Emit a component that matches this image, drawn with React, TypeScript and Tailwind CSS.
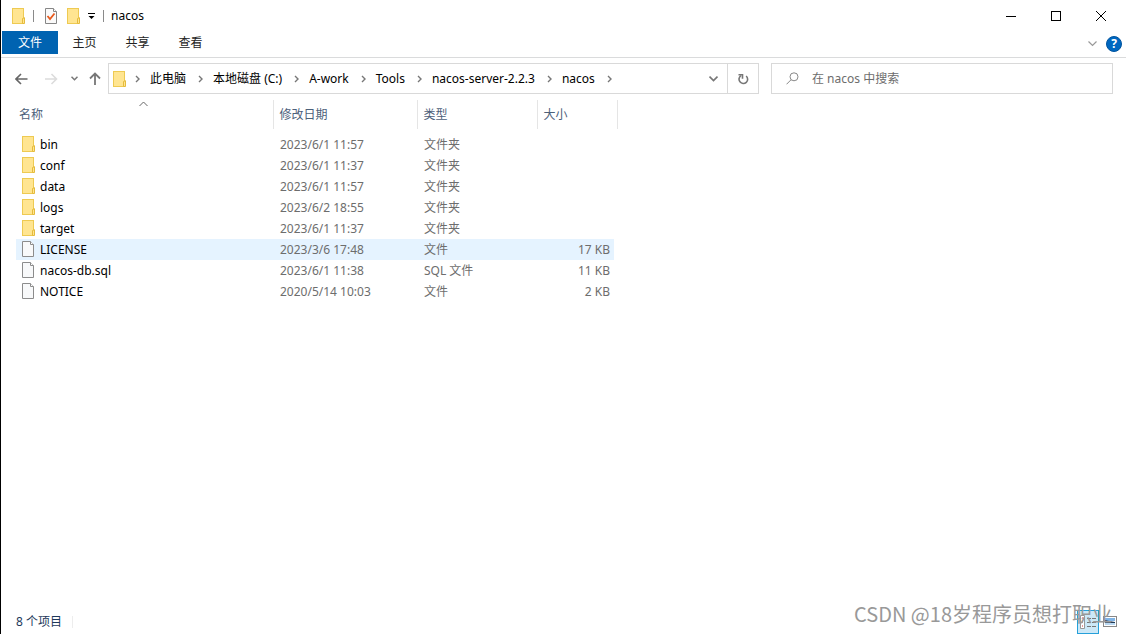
import type { ReactNode } from "react"

interface FileItem {
    name: string;
    date: string;
    type: string;
    size?: string;
    folder?: boolean;
}

const files: FileItem[] = [
    { name: 'bin', date: '2023/6/1 11:57', type: '文件夹', folder: true },
    { name: 'conf', date: '2023/6/1 11:37', type: '文件夹', folder: true },
    { name: 'data', date: '2023/6/1 11:57', type: '文件夹', folder: true },
    { name: 'logs', date: '2023/6/2 18:55', type: '文件夹', folder: true },
    { name: 'target', date: '2023/6/1 11:37', type: '文件夹', folder: true },
    { name: 'LICENSE', date: '2023/3/6 17:48', type: '文件', size: '17 KB' },
    { name: 'nacos-db.sql', date: '2023/6/1 11:38', type: 'SQL 文件', size: '11 KB' },
    { name: 'NOTICE', date: '2020/5/14 10:03', type: '文件', size: '2 KB' },
];

const crumbs = ['此电脑', '本地磁盘 (C:)', 'A-work', 'Tools', 'nacos-server-2.2.3', 'nacos'];

const tabs = ['主页', '共享', '查看'];

const hovered = 'LICENSE';

const FolderIcon = () => (
    <svg width="14" height="16" viewBox="0 0 14 16" className="shrink-0" aria-hidden="true">
        <rect x="0.5" y="0.5" width="11" height="15" fill="#ffe591" stroke="#eeca52" />
        <path d="M10.5 15.5v-5l2-.8v5.8z" fill="#ffe591" stroke="#e5bb3c" />
    </svg>
);

const FileIcon = () => (
    <svg width="14" height="16" viewBox="0 0 14 16" className="shrink-0" aria-hidden="true">
        <path d="M0.5 0.5h8l3 3v12h-11z" fill="#f8f9fa" stroke="#8c8c8c" />
        <path d="M8.5 0.5v3h3" fill="#fff" stroke="#8c8c8c" />
    </svg>
);

const Chevron = () => (
    <svg width="5" height="8" viewBox="0 0 5 8" className="shrink-0" aria-hidden="true">
        <path d="M1 1l3 3-3 3" fill="none" stroke="#777" strokeWidth="1.4" />
    </svg>
);

const IconButton = ({ label, className, children }: { label: string; className: string; children: ReactNode }) => (
    <button type="button" aria-label={label} className={`flex items-center justify-center shrink-0 ${className}`}>
        {children}
    </button>
);

const TitleBar = () => (
    <header className="flex items-center h-[31px] pl-[11px]">
        <FolderIcon />
        <span className="w-px h-3 bg-[#8a8a8a] ml-[7px] mr-[11px]" />
        <IconButton label="属性" className="w-3">
            <svg width="12" height="16" viewBox="0 0 12 16">
                <path d="M0.5 0.5h8l3 3v12h-11z" fill="#fafafa" stroke="#868686" />
                <path d="M8.5 0.5v3h3" fill="#fff" stroke="#868686" />
                <path d="M2.5 8l2.5 3 4.5-5.5" fill="none" stroke="#e8591c" strokeWidth="1.8" />
            </svg>
        </IconButton>
        <IconButton label="新建文件夹" className="ml-[10px]">
            <FolderIcon />
        </IconButton>
        <IconButton label="自定义快速访问工具栏" className="ml-[7px] w-[7px]">
            <svg width="7" height="6" viewBox="0 0 7 6">
                <path d="M0 0.5h7" stroke="#000" />
                <path d="M0.5 3h6l-3 3z" fill="#000" />
            </svg>
        </IconButton>
        <span className="w-px h-3 bg-[#8a8a8a] ml-2 mr-[7px]" />
        <h1>nacos</h1>
        <div className="flex ml-auto pr-[2px]">
            <IconButton label="最小化" className="w-[45px] h-[31px]">
                <svg width="10" height="10" viewBox="0 0 10 10">
                    <path d="M0 5.5h10" stroke="#000" />
                </svg>
            </IconButton>
            <IconButton label="最大化" className="w-[45px] h-[31px]">
                <svg width="10" height="10" viewBox="0 0 10 10">
                    <rect x="0.5" y="0.5" width="9" height="9" fill="none" stroke="#000" />
                </svg>
            </IconButton>
            <IconButton label="关闭" className="w-[46px] h-[31px]">
                <svg width="10" height="10" viewBox="0 0 10 10">
                    <path d="M0 0l10 10M10 0L0 10" stroke="#000" />
                </svg>
            </IconButton>
        </div>
    </header>
);

const Ribbon = () => (
    <nav className="flex items-start h-[27px] pl-px border-b border-[#dadbdc]">
        <button type="button" className="w-14 h-[23px] pt-px bg-[#0063b1] text-white">文件</button>
        {tabs.map((tab) => (
            <button key={tab} type="button" className="w-[53px] h-[23px] pt-px text-[#222]">{tab}</button>
        ))}
        <div className="flex items-center ml-auto h-[26px] gap-[9px] pr-1">
            <IconButton label="展开功能区" className="w-[10px]">
                <svg width="9" height="6" viewBox="0 0 9 6">
                    <path d="M0.5 0.5l4 4 4-4" fill="none" stroke="#999" strokeWidth="1.2" />
                </svg>
            </IconButton>
            <IconButton label="帮助" className="w-4 h-4 rounded-full bg-[#0067c0] border border-[#00549f] text-white font-bold">
                ?
            </IconButton>
        </div>
    </nav>
);

const AddressRow = () => (
    <div className="flex items-center mt-[5px] px-[13px]">
        <IconButton label="后退" className="w-[14px]">
            <svg width="13" height="12" viewBox="0 0 13 12">
                <path d="M12.5 6H1.5M6 1L1 6l5 5" fill="none" stroke="#666" strokeWidth="1.6" />
            </svg>
        </IconButton>
        <IconButton label="前进" className="w-[14px] ml-4">
            <svg width="13" height="12" viewBox="0 0 13 12">
                <path d="M0 6h11.5M6.500 1l5 5-5 5" fill="none" stroke="#dcdcdc" strokeWidth="1.6" />
            </svg>
        </IconButton>
        <IconButton label="最近位置" className="w-2 ml-3">
            <svg width="7" height="5" viewBox="0 0 7 5">
                <path d="M0.5 0.8l3 3 3-3" fill="none" stroke="#777" strokeWidth="1.5" />
            </svg>
        </IconButton>
        <IconButton label="上移" className="w-3 ml-[11px]">
            <svg width="12" height="13" viewBox="0 0 12 13">
                <path d="M6 13V1.5M1 6.500l5-5 5 5" fill="none" stroke="#777" strokeWidth="1.8" />
            </svg>
        </IconButton>

        <div className="flex items-center flex-1 h-[31px] ml-[7px] mr-3 pl-1 border border-[#d9d9d9] min-w-0">
            <FolderIcon />
            <span className="ml-2"><Chevron /></span>
            {crumbs.map((crumb) => (
                <div key={crumb} className="flex items-center shrink-0">
                    <button type="button" className="pl-[10px] pr-3">{crumb}</button>
                    <Chevron />
                </div>
            ))}
            <IconButton label="以前的位置" className="w-7 h-full ml-auto">
                <svg width="9" height="7" viewBox="0 0 9 7">
                    <path d="M0.5 1.5l4 4 4-4" fill="none" stroke="#777" strokeWidth="1.7" />
                </svg>
            </IconButton>
            <IconButton label="刷新" className="w-[31px] h-full border-l border-[#d9d9d9]">
                <svg width="11" height="12" viewBox="0 0 11 12">
                    <path d="M3 2.6A4.300 4.300 0 1 0 8.200 3" fill="none" stroke="#777" strokeWidth="1.6" />
                    <path d="M0.5 1.7h4v4" fill="none" stroke="#777" strokeWidth="1.6" />
                </svg>
            </IconButton>
        </div>

        <label className="flex items-center w-[342px] h-[31px] pl-[14px] border border-[#d9d9d9]">
            <svg width="13" height="13" viewBox="0 0 13 13" className="shrink-0" aria-hidden="true">
                <circle cx="8" cy="4.8" r="4" fill="none" stroke="#888" />
                <path d="M5 7.8L0.5 12.3" stroke="#888" />
            </svg>
            <input
                type="text"
                aria-label="搜索"
                placeholder="在 nacos 中搜索"
                className="flex-1 ml-[13px] outline-none placeholder:text-[#6d6d6d]"
            />
        </label>
    </div>
);

const FileTable = () => (
    <table className="table-fixed w-[601px] ml-[15px] mt-[6px] text-left">
        <colgroup>
            <col className="w-[257px]" />
            <col className="w-[144px]" />
            <col className="w-[120px]" />
            <col className="w-[77px]" />
            <col className="w-[3px]" />
        </colgroup>
        <thead>
            <tr className="h-[29px] text-[#4c607a]">
                <th className="relative pl-[3px] font-normal border-r border-[#e5e5e5]">
                    名称
                    <svg width="9" height="6" viewBox="0 0 9 6" className="absolute left-[123px] top-px" aria-hidden="true">
                        <path d="M0.5 5l4-4 4 4" fill="none" stroke="#666" />
                    </svg>
                </th>
                <th className="pl-[6px] font-normal border-r border-[#e5e5e5]">修改日期</th>
                <th className="pl-[6px] font-normal border-r border-[#e5e5e5]">类型</th>
                <th colSpan={2} className="pl-[6px] font-normal border-r border-[#e5e5e5]">大小</th>
            </tr>
        </thead>
        <tbody className="before:block before:h-[5px] before:content-['']">
            {files.map((file) => (
                <tr key={file.name} className={file.name === hovered ? 'h-[21px] bg-[#e5f3ff]' : 'h-[21px]'}>
                    <td className="pl-[6px]">
                        <div className="flex items-start gap-1 leading-[18px]">
                            {file.folder ? <FolderIcon /> : <FileIcon />}
                            {file.name}
                        </div>
                    </td>
                    <td className="pl-[7px] text-[#6d6d6d]">{file.date}</td>
                    <td className="pl-[7px] text-[#6d6d6d]">{file.type}</td>
                    <td className="pr-1 text-right text-[#6d6d6d]">{file.size}</td>
                </tr>
            ))}
        </tbody>
    </table>
);

const StatusBar = () => (
    <footer className="relative flex items-center h-[25px] mt-auto pl-[15px] pr-[9px]">
        <span className="text-[#1e395b] pr-[10px] border-r border-[#ededed] leading-3">8 个项目</span>
        <div className="flex items-center ml-auto gap-1">
            <IconButton label="详细信息" className="w-[22px] h-6 bg-[#cce8f7] border border-[#26a0da]">
                <svg width="16" height="14" viewBox="0 0 16 14">
                    <path d="M0.5 0.5h4v13h-4z" fill="#fff" stroke="#999" />
                    <path d="M2 3h1M2 7h1M2 11h1" stroke="#c33" />
                    <path d="M7 3.5h4M12 3.5h4M7 7.5h4M12 7.5h4M7 11.5h4M12 11.5h4" stroke="#777" />
                </svg>
            </IconButton>
            <IconButton label="大缩略图" className="w-[14px]">
                <svg width="14" height="11" viewBox="0 0 14 11">
                    <rect x="0.5" y="0.5" width="13" height="10" fill="#fff" stroke="#888" />
                    <path d="M2 2h10v3H2z" fill="#7fb4e6" />
                    <path d="M2 4l4 1 6 1v1H2z" fill="#1f3b57" />
                    <path d="M2 7h10v2H2z" fill="#b9d8f2" />
                </svg>
            </IconButton>
        </div>
        <span className="absolute right-[14px] bottom-[5px] text-[20px] leading-[30px] text-[#999] whitespace-nowrap pointer-events-none font-['Noto_Sans_CJK_SC',sans-serif]">
            CSDN @18岁程序员想打职业
        </span>
    </footer>
);

const App = () => {
    return (
        <div className="flex flex-col min-h-screen bg-white border-l border-black text-[12px] leading-4 text-black font-['Noto_Sans','Noto_Sans_CJK_SC',sans-serif]">
            <TitleBar />
            <Ribbon />
            <AddressRow />
            <main>
                <FileTable />
            </main>
            <StatusBar />
        </div>
    )
}

export default App
